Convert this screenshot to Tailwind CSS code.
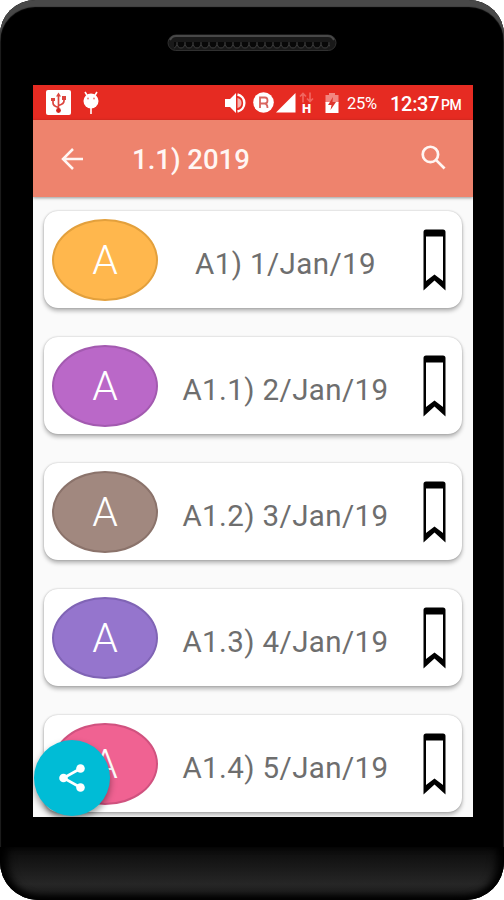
<!DOCTYPE html>
<html lang="en">
<head>
    <meta charset="UTF-8">
    <meta name="viewport" content="width=device-width, initial-scale=1.0">
    <title>1.1) 2019</title>
    <script src="https://cdn.jsdelivr.net/npm/@tailwindcss/browser@4"></script>
</head>
<body class="bg-white font-['Roboto',sans-serif]">
    <div class="relative w-[504px] h-[900px] bg-black rounded-t-[35px] rounded-b-[38px] overflow-hidden flex flex-col shadow-[inset_0_7px_1px_#484848,inset_1px_0_1px_#1a1a1a,inset_-1px_0_1px_#1a1a1a]">
        <!-- Speaker -->
        <div class="h-[85px] shrink-0 flex justify-center pt-[34px]">
            <svg class="w-[170px] h-[18px]" viewBox="0 0 170 18">
                <defs>
                    <pattern id="holes" x="2" width="8" height="18" patternUnits="userSpaceOnUse">
                        <path d="M0 8q0 6 4 6t4-6" fill="#080808" stroke="#3c3c3c" stroke-width="1"/>
                    </pattern>
                </defs>
                <rect x="1" y="1" width="168" height="15.500" rx="7.750" fill="#191919" stroke="#303030"/>
                <path d="M3 6Q5 2 9 2H161Q165 2 167 6" fill="none" stroke="#484848" stroke-width="2"/>
                <rect x="7" y="2" width="156" height="14" fill="url(#holes)"/>
            </svg>
        </div>

        <!-- Screen -->
        <div class="relative ml-[33px] w-[440px] h-[732px] shrink-0 bg-[#fafafa] overflow-hidden flex flex-col">
            <div class="h-[35px] shrink-0 bg-[#e62b22] flex items-center text-white">
                <svg class="ml-[13px] w-[25px] h-[25px] shrink-0" viewBox="0 0 25 25">
                    <rect width="25" height="25" rx="2" fill="#fff"/>
                    <g fill="none" stroke="#dc453e" stroke-width="1.700">
                        <path d="M12.500 20V6M12.500 17.500Q7 16 7 13V9M12.500 15.500Q18 14 18 11V7"/>
                    </g>
                    <path d="M12.500 2.500l2.500 4h-5zM5 8h4v3H5zM16 6h4v4h-4z" fill="#dc453e"/>
                    <circle cx="12.500" cy="20.500" r="2.400" fill="#d3251d"/>
                </svg>
                <svg class="ml-3 w-4 h-[24px] shrink-0" viewBox="0 0 16 24">
                    <path d="M2 1l2.500 4M14 1l-2.500 4M8 16v7" stroke="#fff" stroke-width="1.600"/>
                    <circle cx="8" cy="10" r="7.500" fill="#fff"/>
                    <circle cx="5" cy="7.500" r="1" fill="#f0817b"/>
                    <circle cx="11" cy="7.500" r="1" fill="#f0817b"/>
                </svg>
                <svg class="ml-[126px] w-[22px] h-[22px] shrink-0" viewBox="0 0 22 22">
                    <path d="M0 7h5l6-6v20l-6-6H0z" fill="#fff"/>
                    <path d="M12.500 6q4 1 4 5t-4 5z" fill="#f5b5b1"/>
                    <path d="M12.500 2.500a8.700 8.700 0 0 1 0 17" fill="none" stroke="#fff" stroke-width="2.400"/>
                </svg>
                <svg class="ml-[6px] w-[21px] h-[21px] shrink-0" viewBox="0 0 21 21">
                    <circle cx="10.500" cy="10.500" r="10.300" fill="#fff"/>
                    <path d="M7 16V5.500h5q2.500 0 2.500 3t-2.500 3H7M11.500 11.500Q14.500 12 14.500 16" fill="none" stroke="#d9655f" stroke-width="1.800"/>
                </svg>
                <svg class="ml-[2px] w-[20px] h-[20px] shrink-0" viewBox="0 0 20 20">
                    <path d="M0 19.500L19.500 0v19.500z" fill="#fff"/>
                </svg>
                <div class="ml-[3px] w-[15px] h-[22px] shrink-0 flex flex-col items-center">
                    <svg class="w-[15px] h-[11px] shrink-0" viewBox="0 0 15 11">
                        <path d="M4 10.500V1.500M1 4.500l3-3 3 3M11 0.500v9M8 6.500l3 3 3-3" fill="none" stroke="#f0665f" stroke-width="1.700"/>
                    </svg>
                    <span class="text-[13px] leading-[12px] font-black">H</span>
                </div>
                <svg class="ml-[11px] w-[14px] h-[22px] shrink-0" viewBox="0 0 14 22">
                    <path d="M4 1h6v2h3.500v8H.5V3H4z" fill="#f28680"/>
                    <path d="M.5 10h13v11H.5z" fill="#fff"/>
                    <path d="M8 5L3 13h3.500L5.500 18l5.500-8H7.500z" fill="#df362e"/>
                </svg>
                <span class="ml-[8px] mt-[3px] w-[31px] text-[16.500px] tracking-[-0.3px] whitespace-nowrap">25%</span>
                <span class="ml-[12px] mt-[2px] w-[48px] text-[20px] tracking-[-0.3px] font-medium whitespace-nowrap">12:37</span>
                <span class="ml-[3px] mt-[6px] text-[14px] tracking-[-0.5px] font-medium">PM</span>
            </div>

            <div class="relative h-[77px] shrink-0 bg-[#ee836d] shadow-[0_1px_3px_rgba(0,0,0,0.4)] flex items-center text-[#fff6f3]">
                <svg class="ml-[28px] w-[22px] h-[22px]" viewBox="0 0 22 22" fill="none" stroke="currentColor" stroke-width="2.500">
                    <path d="M22 11H2M12 1L2 11l10 10"/>
                </svg>
                <h1 class="ml-[49px] mt-[3px] text-[27.500px] leading-none font-medium whitespace-nowrap">1.1) 2019</h1>
                <svg class="ml-auto mr-[27px] mb-[2px] w-[25px] h-[25px]" viewBox="0 0 26 26" fill="none" stroke="currentColor" stroke-width="2.800">
                    <circle cx="9.800" cy="9.800" r="8"/>
                    <path d="M15.500 15.500l9 9"/>
                </svg>
            </div>

            <div id="list" class="flex flex-col gap-[29px] pt-[14px] pl-[11px]"></div>

            <button class="absolute left-[1px] top-[655px] w-[76px] h-[76px] rounded-full bg-[#00bcd6] shadow-[0_4px_7px_rgba(0,0,0,0.4)] flex items-center justify-center">
                <svg class="w-[26px] h-[28px]" viewBox="0 0 26 28">
                    <path d="M21.500 4.500L4.500 14l17 9.500" fill="none" stroke="#fff" stroke-width="2.600"/>
                    <circle cx="21.500" cy="4.500" r="4.300" fill="#fff"/>
                    <circle cx="4.500" cy="14" r="4.300" fill="#fff"/>
                    <circle cx="21.500" cy="23.500" r="4.300" fill="#fff"/>
                </svg>
            </button>
        </div>

        <!-- Bottom bezel -->
        <div class="mt-[30px] flex-1 bg-linear-to-b from-[#0b0b0b] via-[#262626] via-70% to-[#161616] shadow-[inset_0_-4px_6px_#000,inset_10px_0_10px_-3px_#000,inset_-10px_0_10px_-3px_#000] rounded-b-[38px]"></div>
    </div>

    <script>
        const items = [
            { title: "A1) 1/Jan/19", color: "#ffb74d", border: "#e3a03c" },
            { title: "A1.1) 2/Jan/19", color: "#ba68c8", border: "#a35ab0" },
            { title: "A1.2) 3/Jan/19", color: "#a1887f", border: "#8b736b" },
            { title: "A1.3) 4/Jan/19", color: "#9575cd", border: "#8064b5" },
            { title: "A1.4) 5/Jan/19", color: "#f06292", border: "#d0527f" }
        ];

        const list = document.getElementById("list");
        items.forEach(item => {
            list.innerHTML += `
                <div class="w-[418px] h-[97px] shrink-0 bg-white rounded-[14px] shadow-[0_3px_4px_rgba(0,0,0,0.28),0_0_2px_rgba(0,0,0,0.25)] flex items-center pl-2">
                    <div class="w-[106px] h-[82px] shrink-0 rounded-[50%] border-2 pt-[2px] flex items-center justify-center text-white text-[41px] leading-none font-light" style="background:${item.color};border-color:${item.border}">A</div>
                    <p class="flex-1 mt-[10px] text-center text-[29.500px] leading-none tracking-[0.4px] text-[#6e6e6e] whitespace-nowrap">${item.title}</p>
                    <svg class="ml-[10px] mr-4 w-[23px] h-[62px] shrink-0" viewBox="0 0 23 62">
                        <path d="M0.500 61.500V3Q0.500 0.500 3 0.500H20Q22.500 0.500 22.500 3V61.500L11.500 51.500zM3 7.500V52L11.500 45.500L20 52V7.500z" fill="#000" fill-rule="evenodd"/>
                    </svg>
                </div>`;
        });
    </script>
</body>
</html>
